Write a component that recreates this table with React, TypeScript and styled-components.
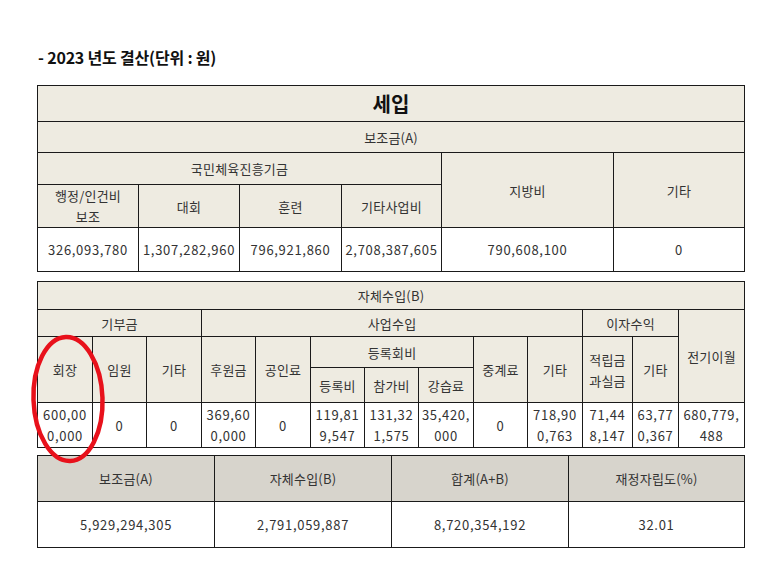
import React from "react";
import styled, { createGlobalStyle } from "styled-components";

const GlobalStyle = createGlobalStyle`
  html, body {
    margin: 0;
    padding: 0;
    background: #fff;
  }
  body {
    font-family: "Noto Sans CJK KR", "Noto Sans", sans-serif;
    color: #333;
  }
`;

const Page = styled.div`
  width: 766px;
  padding: 46px 0 0 37px;
  box-sizing: border-box;
`;

const Title = styled.h3`
  margin: 0 0 17px 1px;
  font-size: 16px;
  font-weight: 700;
  color: #111;
  line-height: 22px;
  letter-spacing: -0.2px;
`;

const Table = styled.table<{ $gap?: number }>`
  width: 707px;
  border-collapse: collapse;
  table-layout: fixed;
  margin-bottom: ${(p) => p.$gap ?? 0}px;
`;

const Row = styled.tr<{ $h: number }>`
  height: ${(p) => p.$h}px;
`;

const Head = styled.th<{ $tone?: "beige" | "gray" }>`
  background: ${(p) => (p.$tone === "gray" ? "#d7d4cc" : "#eeebe1")};
  border: 1px solid #1a1a1a;
  font-size: 13px;
  font-weight: 400;
  color: #333;
  padding: 0 3px;
  line-height: 21px;
  text-align: center;
  vertical-align: middle;
  letter-spacing: 0.2px;
`;

const Caption = styled(Head)`
  font-size: 20px;
  font-weight: 700;
  color: #111;
  letter-spacing: 0;
`;

const Cell = styled.td`
  border: 1px solid #1a1a1a;
  background: #fff;
  font-size: 13px;
  color: #333;
  padding: 0 2px;
  line-height: 21px;
  text-align: center;
  vertical-align: middle;
  word-break: break-all;
  letter-spacing: 0.7px;
`;

const Wrap = styled.div`
  position: relative;
`;

const Mark = styled.svg`
  position: absolute;
  left: -8px;
  top: 52px;
  pointer-events: none;
`;

const Cols = ({ widths }: { widths: number[] }) => (
  <colgroup>
    {widths.map((w, i) => (
      <col key={i} style={{ width: w }} />
    ))}
  </colgroup>
);

const App: React.FC = () => {
  return (
    <>
      <GlobalStyle />
      <Page>
        <Title>- 2023 년도 결산(단위 : 원)</Title>

        <Table $gap={9}>
          <Cols widths={[101, 101, 102, 100, 172, 131]} />
          <tbody>
            <Row $h={36}>
              <Caption colSpan={6}>세입</Caption>
            </Row>
            <Row $h={31}>
              <Head colSpan={6}>보조금(A)</Head>
            </Row>
            <Row $h={32}>
              <Head colSpan={4}>국민체육진흥기금</Head>
              <Head rowSpan={2}>지방비</Head>
              <Head rowSpan={2}>기타</Head>
            </Row>
            <Row $h={42}>
              <Head>
                행정/인건비
                <br />
                보조
              </Head>
              <Head>대회</Head>
              <Head>훈련</Head>
              <Head>기타사업비</Head>
            </Row>
            <Row $h={44}>
              <Cell>326,093,780</Cell>
              <Cell>1,307,282,960</Cell>
              <Cell>796,921,860</Cell>
              <Cell>2,708,387,605</Cell>
              <Cell>790,608,100</Cell>
              <Cell>0</Cell>
            </Row>
          </tbody>
        </Table>

        <Wrap>
          <Table $gap={7}>
            <Cols widths={[55, 54, 55, 54, 55, 54, 54, 55, 54, 55, 50, 46, 66]} />
            <tbody>
              <Row $h={28}>
                <Head colSpan={13}>자체수입(B)</Head>
              </Row>
              <Row $h={27}>
                <Head colSpan={3}>기부금</Head>
                <Head colSpan={7}>사업수입</Head>
                <Head colSpan={2}>이자수익</Head>
                <Head rowSpan={3}>전기이월</Head>
              </Row>
              <Row $h={31}>
                <Head rowSpan={2}>회장</Head>
                <Head rowSpan={2}>임원</Head>
                <Head rowSpan={2}>기타</Head>
                <Head rowSpan={2}>후원금</Head>
                <Head rowSpan={2}>공인료</Head>
                <Head colSpan={3}>등록회비</Head>
                <Head rowSpan={2}>중계료</Head>
                <Head rowSpan={2}>기타</Head>
                <Head rowSpan={2}>
                  적립금
                  <br />
                  과실금
                </Head>
                <Head rowSpan={2}>기타</Head>
              </Row>
              <Row $h={35}>
                <Head>등록비</Head>
                <Head>참가비</Head>
                <Head>강습료</Head>
              </Row>
              <Row $h={45}>
                <Cell>600,000,000</Cell>
                <Cell>0</Cell>
                <Cell>0</Cell>
                <Cell>369,600,000</Cell>
                <Cell>0</Cell>
                <Cell>119,819,547</Cell>
                <Cell>131,321,575</Cell>
                <Cell>35,420,000</Cell>
                <Cell>0</Cell>
                <Cell>718,900,763</Cell>
                <Cell>71,448,147</Cell>
                <Cell>63,770,367</Cell>
                <Cell>680,779,488</Cell>
              </Row>
            </tbody>
          </Table>
          <Mark width="80" height="134" viewBox="0 0 80 134">
            <ellipse
              cx="39"
              cy="66"
              rx="34.5"
              ry="62"
              fill="none"
              stroke="#e8111b"
              strokeWidth="4.5"
              transform="rotate(-2 39 66)"
            />
          </Mark>
        </Wrap>

        <Table>
          <Cols widths={[177, 177, 177, 176]} />
          <tbody>
            <Row $h={46}>
              <Head $tone="gray">보조금(A)</Head>
              <Head $tone="gray">자체수입(B)</Head>
              <Head $tone="gray">합계(A+B)</Head>
              <Head $tone="gray">재정자립도(%)</Head>
            </Row>
            <Row $h={46}>
              <Cell>5,929,294,305</Cell>
              <Cell>2,791,059,887</Cell>
              <Cell>8,720,354,192</Cell>
              <Cell>32.01</Cell>
            </Row>
          </tbody>
        </Table>
      </Page>
    </>
  );
};

export default App;
